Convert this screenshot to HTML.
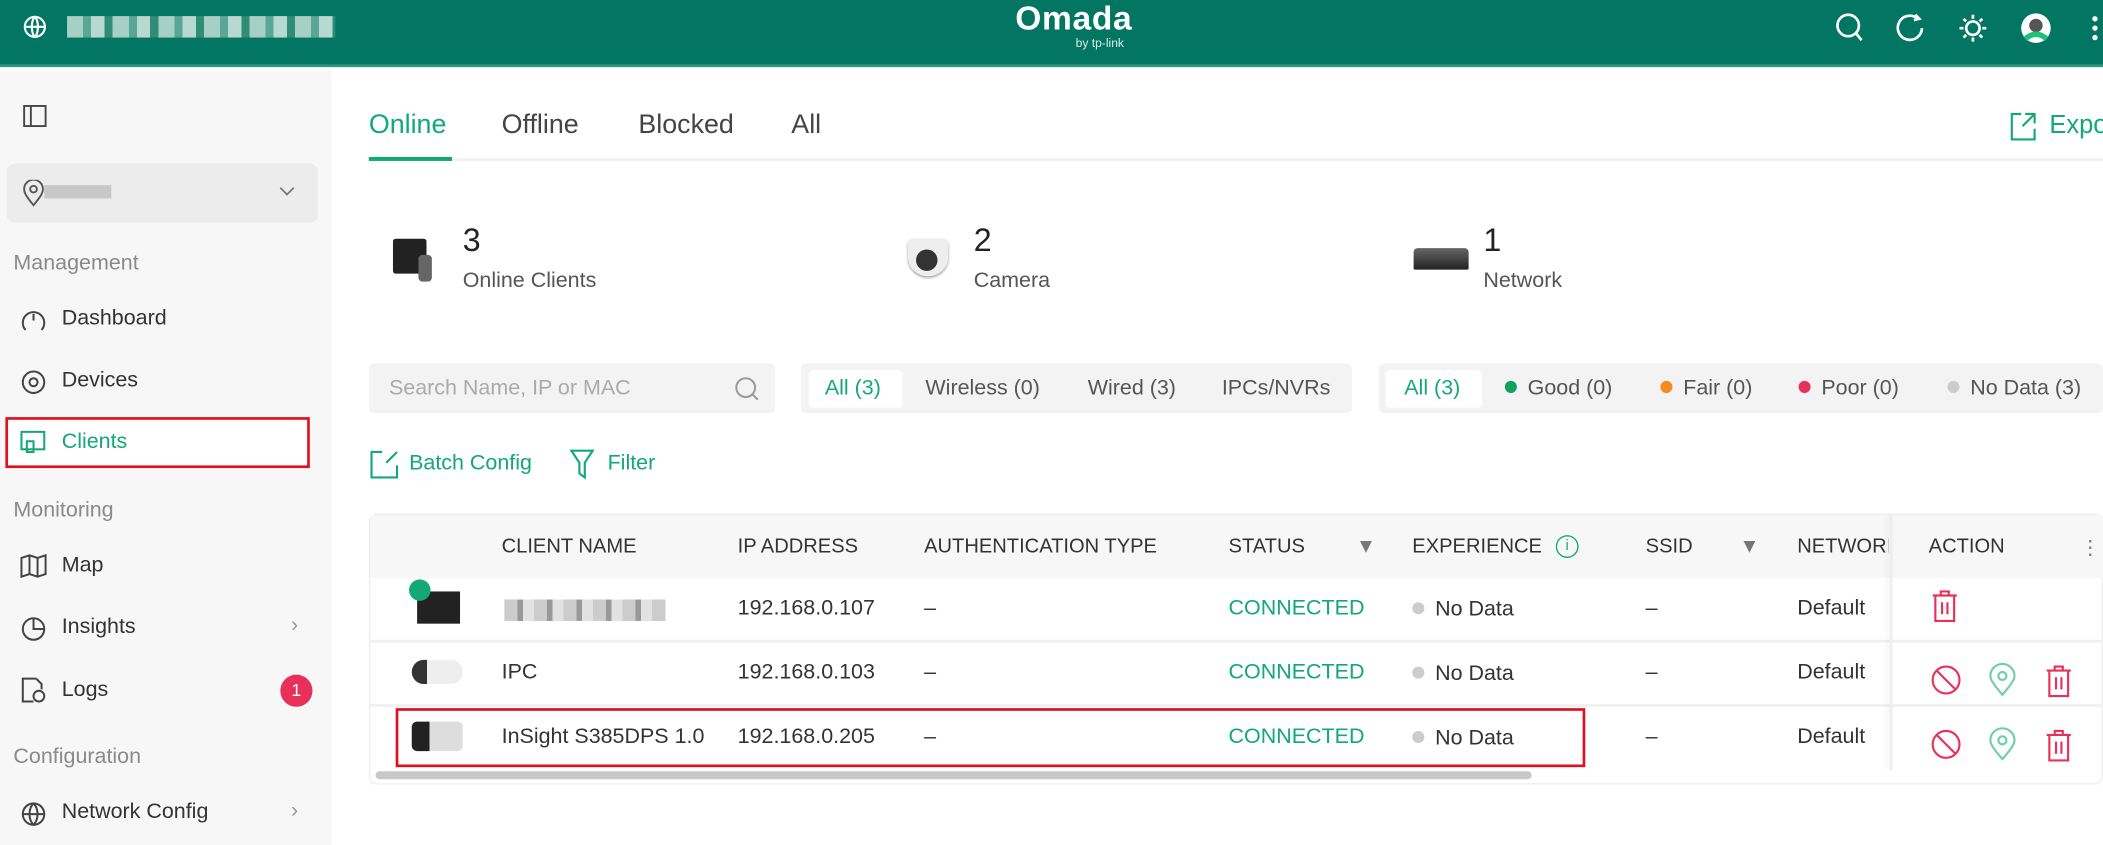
<!DOCTYPE html>
<html><head><meta charset="utf-8"><style>
*{margin:0;padding:0;box-sizing:border-box}
html,body{width:2103px;height:845px;overflow:hidden;background:#fff;font-family:"Liberation Sans",sans-serif}
#s{position:absolute;left:0;top:0;width:1568px;height:630px;transform:scale(1.3412);transform-origin:0 0;color:#333}
.a{position:absolute;white-space:nowrap}
.hd{left:0;top:0;width:1568px;height:50px;background:#037563;border-bottom:2px solid #2a9a7e}
.sb{left:0;top:52px;width:247px;height:578px;background:#f7f7f7}
.sec{font-size:16px;color:#8a8a8a}
.it{font-size:16px;color:#333}
.tab{font-size:20px;color:#444;top:82px}
.num{font-size:24px;color:#222}
.lbl{font-size:16px;color:#555}
.seg{font-size:16px;color:#555;top:281px}
.th{font-size:15px;color:#333;top:399px}
.td{font-size:16px;color:#333}
.g{color:#13a874 !important}
.dot{display:inline-block;width:9px;height:9px;border-radius:50%;margin-right:8px;vertical-align:1px}
</style></head><body><div id="s">
<div class="a hd"></div>
<svg class="a" style="left:17px;top:11px" width="18" height="18" viewBox="0 0 18 18" fill="none" stroke="#fff" stroke-width="1.6"><circle cx="9" cy="9" r="7.5"/><path d="M1.5 9h15M9 1.5c-3 3-3 12 0 15M9 1.5c3 3 3 12 0 15"/></svg>
<div class="a" style="left:50px;top:12px;width:200px;height:16px;background:repeating-linear-gradient(90deg,#cfe6df 0 12px,#6fb3a1 12px 18px,#e6f1ee 18px 28px,#3a927c 28px 34px);opacity:.8"></div>
<div class="a" style="left:757px;top:0px;font-size:25px;color:#fff;font-weight:bold;letter-spacing:.5px">Omada</div>
<div class="a" style="left:802px;top:27px;font-size:9px;color:#dfeee9">by tp-link</div>
<svg class="a" style="left:1366px;top:8px" width="200" height="26" viewBox="0 0 200 26" fill="none" stroke="#fff" stroke-width="2"><circle cx="12" cy="11" r="8"/><path d="M18 17l4 5"/><path d="M64 6a9 9 0 1 0 3 7M62 3l3 3-4 1"/><circle cx="105" cy="13" r="5"/><path d="M105 3v3M105 20v3M95 13h3M112 13h3M98 6l2 2M110 18l2 2M98 20l2-2M110 8l2-2"/><circle cx="152" cy="13" r="11" fill="#fff" stroke="none"/><circle cx="152" cy="11" r="5" fill="#555" stroke="none"/><path d="M144 21q8-7 16 0" stroke="#20c07a" stroke-width="4"/><circle cx="196" cy="6" r="1" fill="#fff"/><circle cx="196" cy="13" r="1" fill="#fff"/><circle cx="196" cy="20" r="1" fill="#fff"/></svg>

<div class="a sb"></div>
<svg class="a" style="left:17px;top:78px" width="18" height="18" fill="none" stroke="#444" stroke-width="1.4"><rect x="1" y="1" width="16" height="15"/><path d="M6 1v15"/></svg>
<div class="a" style="left:5px;top:122px;width:232px;height:44px;background:#ececec;border-radius:6px"></div>
<svg class="a" style="left:17px;top:134px" width="16" height="20" fill="none" stroke="#555" stroke-width="1.4"><path d="M8 19C3 13 1 10 1 7a7 7 0 0 1 14 0c0 3-2 6-7 12z"/><circle cx="8" cy="7" r="2.5"/></svg>
<div class="a" style="left:33px;top:138px;width:50px;height:10px;background:#b9b9b9;opacity:.7"></div>
<svg class="a" style="left:208px;top:139px" width="12" height="8" fill="none" stroke="#777" stroke-width="1.3"><path d="M1 1l5 5 5-5"/></svg>
<div class="a sec" style="left:10px;top:188px">Management</div>
<svg class="a" style="left:15px;top:229px" width="20" height="20" fill="none" stroke="#444" stroke-width="1.5"><path d="M4 17a8 8 0 1 1 12 0"/><path d="M10 10V5"/></svg>
<div class="a it" style="left:46px;top:229px">Dashboard</div>
<svg class="a" style="left:15px;top:275px" width="20" height="20" fill="none" stroke="#444" stroke-width="1.5"><circle cx="10" cy="10" r="8"/><circle cx="10" cy="10" r="3"/></svg>
<div class="a it" style="left:46px;top:275px">Devices</div>
<div class="a" style="left:4px;top:311px;width:227px;height:38px;background:#fff;border:2px solid #e0101e"></div>
<svg class="a" style="left:15px;top:321px" width="20" height="18" fill="none" stroke="#13a874" stroke-width="1.5"><rect x="1" y="1" width="17" height="13"/><rect x="5" y="8" width="5" height="8"/></svg>
<div class="a it g" style="left:46px;top:321px">Clients</div>
<div class="a sec" style="left:10px;top:372px">Monitoring</div>
<svg class="a" style="left:15px;top:413px" width="20" height="18" fill="none" stroke="#444" stroke-width="1.5"><path d="M1 3l6-2 6 2 6-2v14l-6 2-6-2-6 2zM7 1v14M13 3v14"/></svg>
<div class="a it" style="left:46px;top:413px">Map</div>
<svg class="a" style="left:15px;top:459px" width="20" height="20" fill="none" stroke="#444" stroke-width="1.5"><circle cx="10" cy="10" r="8"/><path d="M10 2v8h8"/></svg>
<div class="a it" style="left:46px;top:459px">Insights</div>
<div class="a" style="left:217px;top:458px;color:#999;font-size:16px">›</div>
<svg class="a" style="left:15px;top:505px" width="20" height="20" fill="none" stroke="#444" stroke-width="1.5"><path d="M12 1H2v17h8M12 1l4 4v4"/><circle cx="14" cy="14" r="4"/></svg>
<div class="a it" style="left:46px;top:506px">Logs</div>
<div class="a" style="left:209px;top:503px;width:24px;height:24px;border-radius:50%;background:#e8315a;color:#fff;font-size:13px;text-align:center;line-height:24px">1</div>
<div class="a sec" style="left:10px;top:556px">Configuration</div>
<svg class="a" style="left:15px;top:597px" width="20" height="20" fill="none" stroke="#444" stroke-width="1.5"><circle cx="10" cy="10" r="8"/><path d="M2 10h16M10 2c-4 4-4 12 0 16M10 2c4 4 4 12 0 16"/></svg>
<div class="a it" style="left:46px;top:597px">Network Config</div>
<div class="a" style="left:217px;top:596px;color:#999;font-size:16px">›</div>

<div class="a tab g" style="left:275px">Online</div>
<div class="a tab" style="left:374px">Offline</div>
<div class="a tab" style="left:476px">Blocked</div>
<div class="a tab" style="left:590px">All</div>
<div class="a" style="left:275px;top:118px;width:1293px;height:2px;background:#f0f0f0"></div>
<div class="a" style="left:275px;top:117px;width:62px;height:3px;background:#13a874"></div>
<svg class="a" style="left:1499px;top:83px" width="20" height="22" fill="none" stroke="#13a874" stroke-width="1.6"><path d="M8 2H1v19h17v-8M11 2h7v7M18 2l-9 9"/></svg>
<div class="a g" style="left:1528px;top:83px;font-size:19px">Expor</div>

<div class="a" style="left:293px;top:178px;width:25px;height:26px;background:#222;border-radius:2px"></div>
<div class="a" style="left:312px;top:190px;width:10px;height:20px;background:#666;border-radius:3px"></div>
<div class="a num" style="left:345px;top:166px">3</div>
<div class="a lbl" style="left:345px;top:201px">Online Clients</div>
<div class="a" style="left:677px;top:178px;width:30px;height:28px;border-radius:4px 4px 50% 50%;background:#eee;box-shadow:0 1px 2px #999"></div>
<div class="a" style="left:683px;top:186px;width:16px;height:16px;border-radius:50%;background:#333"></div>
<div class="a num" style="left:726px;top:166px">2</div>
<div class="a lbl" style="left:726px;top:201px">Camera</div>
<div class="a" style="left:1054px;top:185px;width:41px;height:16px;background:linear-gradient(#666,#222);border-radius:3px 3px 1px 1px"></div>
<div class="a num" style="left:1106px;top:166px">1</div>
<div class="a lbl" style="left:1106px;top:201px">Network</div>

<div class="a" style="left:275px;top:271px;width:303px;height:37px;background:#f3f3f3;border-radius:4px"></div>
<div class="a" style="left:290px;top:281px;font-size:16px;color:#aaa">Search Name, IP or MAC</div>
<svg class="a" style="left:547px;top:280px" width="20" height="20" fill="none" stroke="#999" stroke-width="1.5"><circle cx="9" cy="9" r="7"/><path d="M14 14l4 4"/></svg>
<div class="a" style="left:597px;top:271px;width:411px;height:37px;background:#f3f3f3;border-radius:4px"></div>
<div class="a" style="left:603px;top:276px;width:70px;height:28px;background:#fff;border-radius:3px"></div>
<div class="a seg g" style="left:615px">All (3)</div>
<div class="a seg" style="left:690px">Wireless (0)</div>
<div class="a seg" style="left:811px">Wired (3)</div>
<div class="a seg" style="left:911px">IPCs/NVRs</div>
<div class="a" style="left:1028px;top:271px;width:540px;height:37px;background:#f3f3f3;border-radius:4px"></div>
<div class="a" style="left:1033px;top:276px;width:72px;height:28px;background:#fff;border-radius:3px"></div>
<div class="a seg g" style="left:1047px">All (3)</div>
<div class="a seg" style="left:1122px"><span class="dot" style="background:#10a060"></span>Good (0)</div>
<div class="a seg" style="left:1238px"><span class="dot" style="background:#f7891f"></span>Fair (0)</div>
<div class="a seg" style="left:1341px"><span class="dot" style="background:#e8315a"></span>Poor (0)</div>
<div class="a seg" style="left:1452px"><span class="dot" style="background:#ccc"></span>No Data (3)</div>

<svg class="a" style="left:276px;top:335px" width="22" height="22" fill="none" stroke="#13a874" stroke-width="1.6"><path d="M9 2H1v19h19v-9M12 10l8-8"/></svg>
<div class="a g" style="left:305px;top:337px;font-size:16px">Batch Config</div>
<svg class="a" style="left:425px;top:334px" width="18" height="24" fill="none" stroke="#13a874" stroke-width="1.6"><path d="M1 2h16l-6 9v11l-4-3v-8z"/></svg>
<div class="a g" style="left:453px;top:337px;font-size:16px">Filter</div>

<div class="a" style="left:275px;top:383px;width:1293px;height:202px;border:1px solid #eee;border-radius:6px"></div>
<div class="a" style="left:276px;top:384px;width:1292px;height:47px;background:#f7f7f7"></div>
<div class="a" style="left:276px;top:477px;width:1292px;height:2px;background:#f0f0f0"></div>
<div class="a" style="left:276px;top:525px;width:1292px;height:2px;background:#f0f0f0"></div>
<div class="a" style="left:1409px;top:384px;width:2px;height:190px;background:#eee;box-shadow:-2px 0 4px rgba(0,0,0,.06)"></div>
<div class="a th" style="left:374px">CLIENT NAME</div>
<div class="a th" style="left:550px">IP ADDRESS</div>
<div class="a th" style="left:689px">AUTHENTICATION TYPE</div>
<div class="a th" style="left:916px">STATUS</div>
<div class="a th" style="left:1011px;color:#777">▼</div>
<div class="a th" style="left:1053px">EXPERIENCE</div>
<div class="a" style="left:1160px;top:399px;width:17px;height:17px;border:1.5px solid #13a874;border-radius:50%;color:#13a874;font-size:11px;text-align:center;line-height:14px">i</div>
<div class="a th" style="left:1227px">SSID</div>
<div class="a th" style="left:1297px;color:#777">▼</div>
<div class="a th" style="left:1340px;width:68px;overflow:hidden">NETWORK</div>
<div class="a th" style="left:1438px">ACTION</div>
<div class="a th" style="left:1551px;color:#777">⋮</div>

<div class="a" style="left:311px;top:441px;width:32px;height:24px;background:#222"></div>
<div class="a" style="left:305px;top:432px;width:16px;height:16px;border-radius:50%;background:#13a874"></div>
<div class="a" style="left:376px;top:447px;width:120px;height:16px;background:repeating-linear-gradient(90deg,#ccc 0 10px,#999 10px 14px,#e2e2e2 14px 22px)"></div>
<div class="a td" style="left:550px;top:445px">192.168.0.107</div>
<div class="a td" style="left:689px;top:445px">–</div>
<div class="a td g" style="left:916px;top:445px">CONNECTED</div>
<div class="a td" style="left:1053px;top:446px"><span class="dot" style="background:#ccc"></span>No Data</div>
<div class="a td" style="left:1227px;top:445px">–</div>
<div class="a td" style="left:1340px;top:445px">Default</div>

<div class="a" style="left:307px;top:492px;width:38px;height:18px;border-radius:9px;background:linear-gradient(90deg,#333 0 30%,#eee 30%)"></div>
<div class="a td" style="left:374px;top:493px">IPC</div>
<div class="a td" style="left:550px;top:493px">192.168.0.103</div>
<div class="a td" style="left:689px;top:493px">–</div>
<div class="a td g" style="left:916px;top:493px">CONNECTED</div>
<div class="a td" style="left:1053px;top:494px"><span class="dot" style="background:#ccc"></span>No Data</div>
<div class="a td" style="left:1227px;top:493px">–</div>
<div class="a td" style="left:1340px;top:493px">Default</div>

<div class="a" style="left:307px;top:538px;width:38px;height:22px;border-radius:4px;background:linear-gradient(90deg,#222 0 35%,#ddd 35%)"></div>
<div class="a td" style="left:374px;top:541px">InSight S385DPS 1.0</div>
<div class="a td" style="left:550px;top:541px">192.168.0.205</div>
<div class="a td" style="left:689px;top:541px">–</div>
<div class="a td g" style="left:916px;top:541px">CONNECTED</div>
<div class="a td" style="left:1053px;top:542px"><span class="dot" style="background:#ccc"></span>No Data</div>
<div class="a td" style="left:1227px;top:541px">–</div>
<div class="a td" style="left:1340px;top:541px">Default</div>
<div class="a" style="left:295px;top:528px;width:887px;height:44px;border:2px solid #e0101e"></div>
<div class="a" style="left:280px;top:575px;width:862px;height:6px;background:#c8c8c8;border-radius:3px"></div>

<svg class="a" style="left:1438px;top:440px" width="110" height="130" fill="none" stroke-width="1.6">
<g stroke="#e8315a"><path d="M3 4h18M9 4V1h6v3M5 4v19h14V4M10 9v9M14 9v9"/></g>
<g transform="translate(0,56)"><circle cx="13" cy="11" r="10" stroke="#e8315a"/><path d="M6 4l14 14" stroke="#e8315a"/><path d="M55 22C49 15 46 11 46 8a9 9 0 0 1 18 0c0 3-3 7-9 14z" stroke="#6fcfa8"/><circle cx="55" cy="8" r="3" stroke="#6fcfa8"/><g stroke="#e8315a" transform="translate(85,0)"><path d="M3 4h18M9 4V1h6v3M5 4v19h14V4M10 9v9M14 9v9"/></g></g>
<g transform="translate(0,104)"><circle cx="13" cy="11" r="10" stroke="#e8315a"/><path d="M6 4l14 14" stroke="#e8315a"/><path d="M55 22C49 15 46 11 46 8a9 9 0 0 1 18 0c0 3-3 7-9 14z" stroke="#6fcfa8"/><circle cx="55" cy="8" r="3" stroke="#6fcfa8"/><g stroke="#e8315a" transform="translate(85,0)"><path d="M3 4h18M9 4V1h6v3M5 4v19h14V4M10 9v9M14 9v9"/></g></g>
</svg>
</div></body></html>
